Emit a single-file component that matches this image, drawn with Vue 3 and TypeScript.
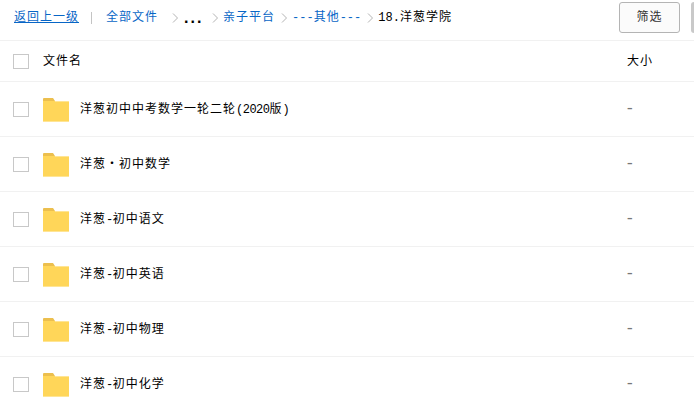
<template>
  <div class="page">
    <div class="toolbar">
      <a class="back">返回上一级</a>
      <span class="sep"></span>
      <a class="crumb">全部文件</a>
      <svg class="chev first" viewBox="0 0 6 10"><path d="M1 .5 5.5 5 1 9.5" /></svg>
      <span class="dots">...</span>
      <svg class="chev" viewBox="0 0 6 10"><path d="M1 .5 5.5 5 1 9.5" /></svg>
      <a class="crumb">亲子平台</a>
      <svg class="chev" viewBox="0 0 6 10"><path d="M1 .5 5.5 5 1 9.5" /></svg>
      <a class="crumb">
        <span v-for="(s, i) in split('---其他---')" :key="i" :class="{ latin: s.latin }">{{ s.text }}</span>
      </a>
      <svg class="chev" viewBox="0 0 6 10"><path d="M1 .5 5.5 5 1 9.5" /></svg>
      <span class="current">
        <span v-for="(s, i) in split('18.洋葱学院')" :key="i" :class="{ latin: s.latin }">{{ s.text }}</span>
      </span>
      <button class="filter">筛选</button>
      <span class="next-btn"></span>
    </div>
    <div class="row head">
      <span class="check"></span>
      <span class="name">文件名</span>
      <span class="size">大小</span>
    </div>
    <div v-for="item in files" :key="item" class="row file">
      <span class="check"></span>
      <svg class="folder" viewBox="0 0 26 24">
        <path d="M0 1a1 1 0 0 1 1-1h9l2 3v3H0z" fill="#ecbf4e" />
        <path d="M0 3h26v20a1 1 0 0 1-1 1H1a1 1 0 0 1-1-1z" fill="#ffd659" />
        <path d="M12 3h14v1H12zM0 23h26v1H0z" fill="#ffe595" />
      </svg>
      <span class="title">
        <span v-for="(s, i) in split(item)" :key="i" :class="{ latin: s.latin }">{{ s.text }}</span>
      </span>
      <span class="size dash">-</span>
    </div>
  </div>
</template>

<script setup lang="ts">
const files: string[] = [
  '洋葱初中中考数学一轮二轮(2020版)',
  '洋葱・初中数学',
  '洋葱-初中语文',
  '洋葱-初中英语',
  '洋葱-初中物理',
  '洋葱-初中化学',
]

// half width characters don't get the extra letter spacing
function split(text: string) {
  const parts = text.match(/[\x20-\x7e]+|[^\x20-\x7e]+/g) || []
  return parts.map((p) => ({ text: p, latin: /^[\x20-\x7e]/.test(p) }))
}
</script>

<style scoped>
.page {
  width: 694px;
  height: 411px;
  overflow: hidden;
  background: #fff;
  color: #000;
  font-family: "Liberation Mono", "Noto Sans CJK SC", monospace;
  font-size: 12px;
  letter-spacing: 1px;
}

.latin {
  letter-spacing: 0;
}

.title .latin {
  letter-spacing: -.5px;
}

.toolbar {
  display: flex;
  align-items: center;
  height: 41px;
  padding: 0 0 5px 14px;
  box-sizing: border-box;
  border-bottom: 1px solid #f1f1f1;
  line-height: 16px;
}

.back {
  color: #0866c6;
  text-decoration: underline;
}

.sep {
  width: 1px;
  height: 12px;
  margin: 0 14px 0 12px;
  background: #c4c4c4;
}

.crumb {
  color: #0866c6;
}

.chev {
  flex: none;
  width: 6px;
  height: 10px;
  margin: 0 5px 0 6px;
  fill: none;
  stroke: #b3b3b3;
  stroke-width: 1;
}

.chev.first {
  margin-left: 14px;
  margin-right: 6px;
}

.dots {
  width: 22px;
  font-family: "Liberation Sans", sans-serif;
  font-size: 16px;
  font-weight: 700;
  letter-spacing: 2px;
  line-height: 14px;
}

.filter {
  width: 61px;
  height: 31px;
  margin-left: auto;
  padding: 0;
  border: 1px solid #b4b4b4;
  border-radius: 3px;
  background: #fbfbfb;
  color: #333;
  font: inherit;
  letter-spacing: 1px;
}

.next-btn {
  width: 12px;
  height: 31px;
  margin-left: 11px;
  margin-right: -9px;
  flex: none;
  border-radius: 3px;
  background: #c9c9c9;
}

.row {
  display: flex;
  align-items: center;
  box-sizing: border-box;
  padding-left: 13px;
  border-bottom: 1px solid #f1f1f1;
}

.head {
  height: 41px;
}

.file {
  height: 55px;
}

.check {
  flex: none;
  width: 16px;
  height: 15px;
  box-sizing: border-box;
  border: 1px solid #c8c8c8;
  background: #fff;
}

.name,
.title,
.size {
  position: relative;
  top: -1px;
}

.name {
  margin-left: 14px;
}

.folder {
  flex: none;
  width: 26px;
  height: 24px;
  margin-left: 14px;
  margin-top: 2px;
}

.title {
  margin-left: 11px;
}

.size {
  margin-left: auto;
  width: 67px;
}

.dash {
  top: 0;
  color: #777;
  font-size: 16px;
  width: 69px;
  letter-spacing: 0;
}
</style>

<style>
html,
body {
  margin: 0;
  background: #fff;
}
</style>
